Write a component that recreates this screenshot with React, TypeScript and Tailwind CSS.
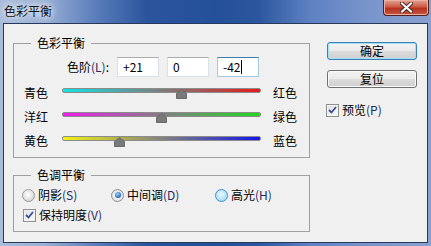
import React from 'react';

const sliders = [
  { left: '青色', right: '红色', value: 21, bar: 'bg-[linear-gradient(to_right,#14e2e2,#e61a1a)]' },
  { left: '洋红', right: '绿色', value: 0, bar: 'bg-[linear-gradient(to_right,#f01cf0,#1cdc1c)]' },
  { left: '黄色', right: '蓝色', value: -42, bar: 'bg-[linear-gradient(to_right,#f2f212,#1414ea)]' },
];

function Key({ k }: { k: string }) {
  return <span className="text-[#1c2a63]">({k})</span>;
}

function CheckBox() {
  return (
    <span className="flex h-[13px] w-[13px] shrink-0 items-center justify-center border border-[#8e8f8f] bg-[linear-gradient(135deg,#dedede,#fdfdfd)] shadow-[inset_0_0_0_1px_#f4f4f4]">
      <svg width="9" height="8" viewBox="0 0 9 8">
        <path d="M1 4 L3.5 6.5 L8 1" fill="none" stroke="#3a4f99" strokeWidth="1.8" />
      </svg>
    </span>
  );
}

function Radio({ state }: { state: 'off' | 'on' | 'hover' }) {
  if (state === 'on')
    return (
      <span className="flex h-[13px] w-[13px] shrink-0 items-center justify-center rounded-full border border-[#8e8f8f] bg-[radial-gradient(circle,#ffffff,#d6d6d6)]">
        <span className="h-[6px] w-[6px] rounded-full bg-[radial-gradient(circle_at_40%_35%,#9fd8ff,#1b64b8_70%)]" />
      </span>
    );
  if (state === 'hover')
    return (
      <span className="h-[13px] w-[13px] shrink-0 rounded-full border border-[#3d8fd0] bg-[radial-gradient(circle_at_45%_40%,#eaf8ff,#a9dcf6_75%)]" />
    );
  return (
    <span className="h-[13px] w-[13px] shrink-0 rounded-full border border-[#9a9a9a] bg-[radial-gradient(circle_at_45%_40%,#ffffff,#d4d4d4_80%)]" />
  );
}

function Slider({ value, bar }: { value: number; bar: string }) {
  const x = ((value + 100) / 200) * 198;
  return (
    <div className="relative h-[16px] w-[199px]">
      <div className={`absolute left-0 right-0 top-[3px] h-[5px] rounded-[2px] border border-[#8c8c8c] ${bar}`} />
      <svg className="absolute top-[4px]" style={{ left: x - 5.5 }} width="11" height="10" viewBox="0 0 11 10">
        <polygon points="5.5,0.5 10.5,4.5 10.5,9.5 0.5,9.5 0.5,4.5" fill="#7a7a7a" stroke="#6a6a6a" />
      </svg>
    </div>
  );
}

function Button({ label, primary }: { label: string; primary?: boolean }) {
  return (
    <button
      className={`flex h-[18px] w-[90px] items-center justify-center rounded-[3px] border leading-[16px] text-black bg-[linear-gradient(#f3f3f3,#ebebeb_48%,#dcdcdc_52%,#cfcfcf)] ${
        primary ? 'border-[#3c7fb1] shadow-[inset_0_0_0_1px_#9fe0f8]' : 'border-[#707070] shadow-[inset_0_0_0_1px_#fbfbfb]'
      }`}
    >
      {label}
    </button>
  );
}

export default function App() {
  return (
    <div className="flex h-[246px] w-[431px] flex-col overflow-hidden bg-[linear-gradient(to_right,#a9bddb_0%,#9cb1d5_10%,#5b7ebb_22%,#2b549d_34%,#24509a_50%,#2c579e_60%,#5e81c3_72%,#7894cb_85%,#8aa1cf_100%)] font-['Noto_Sans_CJK_SC',sans-serif] text-[12px] leading-[16px] text-black">
      <div className="flex h-[23px] shrink-0 items-start justify-between pl-[4px] pr-[2px]">
        <span className="mt-[3px] text-[#111] [text-shadow:0_0_6px_#fff,0_0_10px_#fff]">色彩平衡</span>
        <div className="flex h-[16px] w-[46px] items-center justify-center rounded-b-[4px] border border-t-0 border-[#50201a] bg-[linear-gradient(#e3a394,#cc5b47_45%,#b7321e_55%,#c65540)] shadow-[inset_0_0_0_1px_#eab0a4]">
          <svg width="13" height="11" viewBox="0 0 13 11">
            <path d="M2 1.5 L11 9.5 M11 1.5 L2 9.5" stroke="#4a2a2a" strokeWidth="4" strokeLinecap="square" />
            <path d="M2 1.5 L11 9.5 M11 1.5 L2 9.5" stroke="#ffffff" strokeWidth="2" strokeLinecap="square" />
          </svg>
        </div>
      </div>

      <div className="mx-[3px] mb-[3px] flex flex-1 border border-[#27395a] bg-[#f0f0f0]">
        <div className="ml-[9px] flex flex-col">
          <div className="mt-[19px] h-[115px] w-[297px] border border-[#a0a0a0]">
            <div className="-mt-[9px] ml-[17px] w-fit bg-[#f0f0f0] px-[6px]">色彩平衡</div>
            <div className="mt-[6px] flex h-[20px] items-center gap-[8px]">
              <span className="w-[95px] text-right">
                色阶<Key k="L" />:
              </span>
              {['+21', '0', '-42'].map((v, i) => (
                <div
                  key={i}
                  className={`flex h-[20px] w-[42px] items-center border bg-white pl-[5px] ${
                    i === 2 ? 'border-[#a4c9e3] border-t-[#3d7bad]' : 'border-[#dbdfe6] border-t-[#abadb3]'
                  }`}
                >
                  {v}
                  {i === 2 && <span className="ml-[1px] h-[14px] w-px bg-black" />}
                </div>
              ))}
            </div>
            <div className="mt-[4px] flex flex-col">
              {sliders.map((s) => (
                <div key={s.left} className="flex h-[24px] items-center pl-[10px]">
                  <span className="w-[38px]">{s.left}</span>
                  <Slider value={s.value} bar={s.bar} />
                  <span className="ml-[12px]">{s.right}</span>
                </div>
              ))}
            </div>
          </div>

          <div className="mt-[17px] h-[57px] w-[297px] border border-[#a0a0a0]">
            <div className="-mt-[9px] ml-[17px] w-fit bg-[#f0f0f0] px-[6px]">色调平衡</div>
            <div className="mt-[4px] flex h-[16px] items-center pl-[8px]">
              <label className="flex w-[89px] items-center gap-[3px]">
                <Radio state="off" />
                <span>阴影<Key k="S" /></span>
              </label>
              <label className="flex w-[104px] items-center gap-[3px]">
                <Radio state="on" />
                <span>中间调<Key k="D" /></span>
              </label>
              <label className="flex items-center gap-[3px]">
                <Radio state="hover" />
                <span>高光<Key k="H" /></span>
              </label>
            </div>
            <label className="mt-[4px] flex h-[16px] items-center gap-[3px] pl-[9px]">
              <CheckBox />
              <span>保持明度<Key k="V" /></span>
            </label>
          </div>
        </div>

        <div className="ml-[17px] mt-[18px] flex flex-col">
          <Button label="确定" primary />
          <div className="mt-[10px]">
            <Button label="复位" />
          </div>
          <label className="-ml-px mt-[14px] flex h-[16px] items-center gap-[3px]">
            <CheckBox />
            <span>预览<Key k="P" /></span>
          </label>
        </div>
      </div>
    </div>
  );
}
